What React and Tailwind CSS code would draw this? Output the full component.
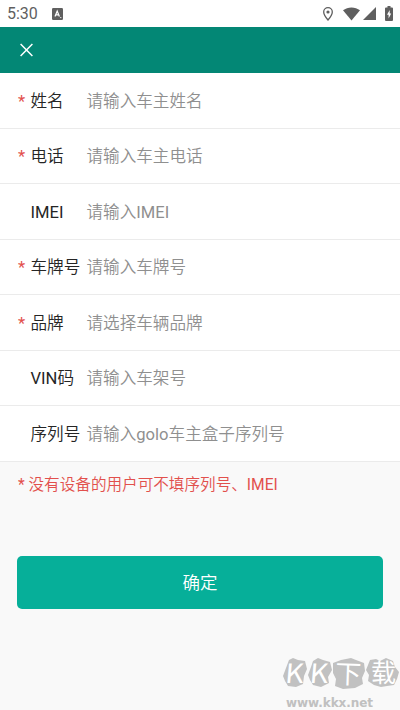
import React from "react";

const fields = [
  { label: "姓名", placeholder: "请输入车主姓名", required: true },
  { label: "电话", placeholder: "请输入车主电话", required: true },
  { label: "IMEI", placeholder: "请输入IMEI", required: false },
  { label: "车牌号", placeholder: "请输入车牌号", required: true },
  { label: "品牌", placeholder: "请选择车辆品牌", required: true },
  { label: "VIN码", placeholder: "请输入车架号", required: false },
  { label: "序列号", placeholder: "请输入golo车主盒子序列号", required: false },
];

const StatusBar = () => (
  <div className="flex h-[27px] items-center bg-white pl-[7px] pr-[7px] text-[#5f5f5f]">
    <span className="mt-px text-[16px] leading-none">5:30</span>
    <svg className="ml-[14px]" width="11" height="12" viewBox="0 0 11 12">
      <rect width="11" height="12" rx="1.2" fill="#5f5f5f" />
      <path d="M3 8.5 5.2 3l2.2 5.5M3.8 6.8h2.9" fill="none" stroke="#fff" strokeWidth="1.2" />
      <path d="M8 9.6h1.4" stroke="#fff" strokeWidth="0.8" />
    </svg>
    <div className="ml-auto flex items-center">
      <svg width="10" height="14" viewBox="0 0 10 14">
        <path d="M5 .7C2.6.7.7 2.6.7 5c0 3.1 4.3 8 4.3 8s4.3-4.9 4.3-8C9.3 2.6 7.4.7 5 .7z" fill="none" stroke="#5f5f5f" strokeWidth="1.3" />
        <circle cx="5" cy="5" r="1.6" fill="#5f5f5f" />
      </svg>
      <svg className="ml-[10px]" width="17" height="14" viewBox="0 0 17 14">
        <path d="M0 3.3C4.7-.6 12.3-.6 17 3.3L8.5 13.5z" fill="#5f5f5f" />
      </svg>
      <svg className="ml-[3px]" width="13" height="13" viewBox="0 0 13 13">
        <path d="M13 0v13H0z" fill="#5f5f5f" />
      </svg>
      <svg className="ml-[9px]" width="8" height="15" viewBox="0 0 8 15">
        <path d="M2.5 0h3v1.5H7q1 0 1 1V14q0 1-1 1H1q-1 0-1-1V2.5q0-1 1-1h1.5z" fill="#5f5f5f" />
        <path d="M4.7 4 2 8.8h1.6v3.7l2.6-5H4.7z" fill="#fff" />
      </svg>
    </div>
  </div>
);

// Chinese glyphs use the DemiLight cut, latin letters stay at the regular weight
const Mixed = ({ text }) =>
  text.split(/([A-Za-z*]+)/).map((part, i) =>
    /[A-Za-z*]/.test(part) ? (
      <span key={i} className="font-normal">
        {part}
      </span>
    ) : (
      part
    )
  );

const FormRow = ({ label, placeholder, required }) => (
  <div className="flex h-[55.5px] items-center border-b border-[#ebebeb] bg-white pl-[18px] pt-1 text-[16.6px] font-[350]">
    <span className="w-[12.5px] font-normal text-[#e2504c]">{required ? "*" : ""}</span>
    <span className="w-14 whitespace-nowrap text-[#252525]">
      <Mixed text={label} />
    </span>
    <span className="whitespace-nowrap text-[#8f8f8f]">
      <Mixed text={placeholder} />
    </span>
  </div>
);

const Watermark = () => (
  <svg
    className="absolute bottom-0 right-0"
    width="130"
    height="75"
    viewBox="270 635 130 75"
    fontFamily="'Noto Sans CJK SC', sans-serif"
  >
    <g fill="#c1c1c1">
      <path d="m289 660 4-2 5 2 7 1 2 8-3 7-1 8-7 3-8-1-3-5-2-5 3-8z" />
      <path d="m313 661 5-3 5 2 7 2 2 8-4 7 1 6-8 4-8-2-3-5-2-5 3-8z" />
      <path d="m333 663 8-3 10-2 5 2 8 3 1 8-3 7 1 6-8 4-12 1-8-3 1-7-3-6z" />
      <path d="m370 660 6-1 4 2 6-3 7 3 2 6 4 5-2 7-3 6-7 1-6 1-7-2-6-4 1-6-3-5z" />
    </g>
    <g fill="#fff" fontSize="26">
      <text transform="translate(284.5 683) skewX(-5) scale(1.1 1.02)">K</text>
      <text transform="translate(309 683) skewX(-5) scale(1.1 1.02)">K</text>
      <text transform="translate(335 683) rotate(2)">下</text>
      <text x="371" y="682" fontSize="25">载</text>
    </g>
    <text x="286" y="707" fill="#c0c0c0" fontSize="12" fontWeight="bold" fontFamily="'DejaVu Sans', sans-serif" textLength="87" lengthAdjust="spacing">
      www.kkx.net
    </text>
  </svg>
);

const App = () => {
  return (
    <div className="relative flex h-[710px] w-[400px] flex-col overflow-hidden bg-[#f9f9f9] font-[Roboto,'Noto_Sans_CJK_SC',sans-serif]">
      <StatusBar />
      <header className="flex h-[46px] shrink-0 items-center bg-[#038775] pl-5">
        <button aria-label="关闭">
          <svg width="13" height="14" viewBox="0 0 13 14">
            <path d="m.6 1 11.8 12M12.4 1 .6 13" stroke="#fff" strokeWidth="1.5" />
          </svg>
        </button>
      </header>

      <div>
        {fields.map((field) => (
          <FormRow key={field.label} {...field} />
        ))}
      </div>

      <p className="mt-[11px] whitespace-nowrap pl-[18px] text-[15.6px] font-[350] leading-6 text-[#e2504c]">
        <Mixed text="* 没有设备的用户可不填序列号、IMEI" />
      </p>

      <button className="mx-[17px] mt-[59px] h-[53.5px] shrink-0 rounded-[5px] bg-[#06af99] pt-px text-[17.5px] font-[350] text-white">
        确定
      </button>

      <Watermark />
    </div>
  );
};

export default App;
